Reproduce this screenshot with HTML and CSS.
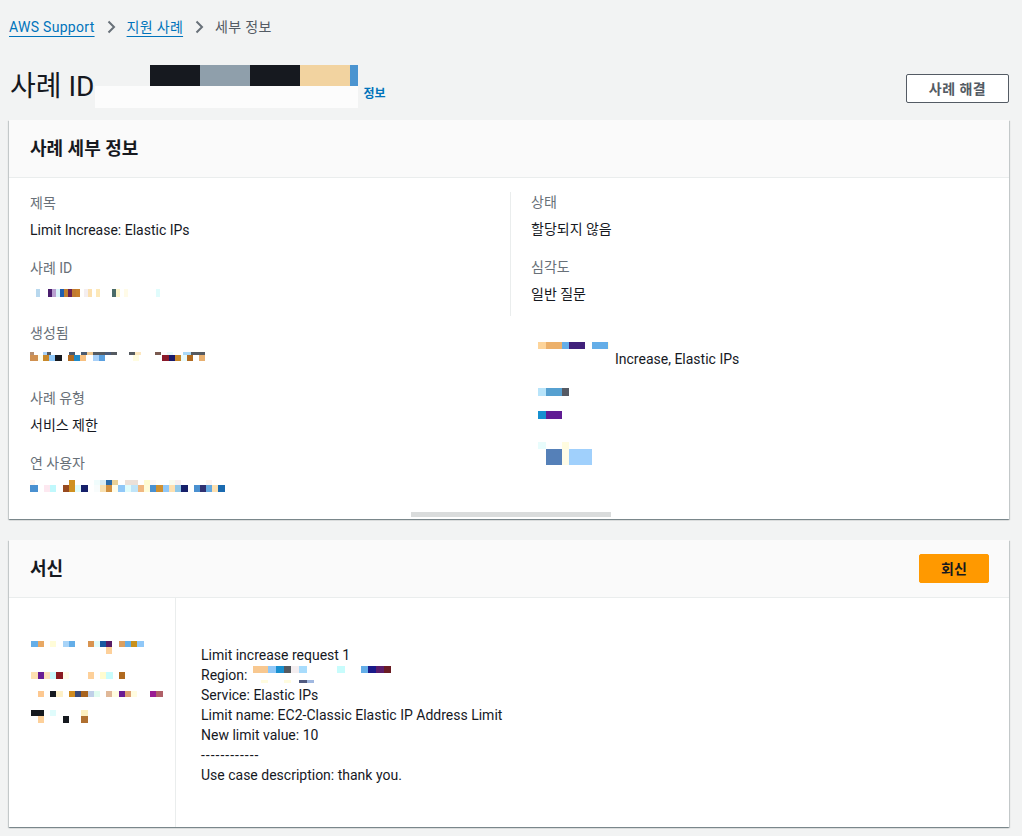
FILE: index.html
```html
<!DOCTYPE html>
<html lang="ko">
<head>
<meta charset="utf-8">
<title>세부 정보</title>
<link rel="stylesheet" href="styles.css">
</head>
<body>
<div class="page">
  <nav class="crumbs">
    <a class="crumb-link" href="#">AWS Support</a>
    <svg class="chev" viewBox="0 0 16 16" aria-hidden="true"><path d="M5.5 2.5 11 8 5.5 13.5"/></svg>
    <a class="crumb-link" href="#">지원 사례</a>
    <svg class="chev" viewBox="0 0 16 16" aria-hidden="true"><path d="M5.5 2.5 11 8 5.5 13.5"/></svg>
    <span class="crumb-current">세부 정보</span>
  </nav>

  <header class="page-head">
    <div class="title-wrap">
      <h1 class="title">사례 ID</h1>
      <div class="redact-title">
        <div class="redact-bar"></div>
        <div class="redact-mask"></div>
      </div>
      <a class="info-link" href="#">정보</a>
    </div>
    <button class="btn btn-normal" type="button">사례 해결</button>
  </header>

  <section class="card">
    <div class="card-head"><h2 class="card-title">사례 세부 정보</h2></div>
    <div class="details">
      <div class="col-left">
        <div class="field">
          <div class="label">제목</div>
          <div class="value">Limit Increase: Elastic IPs</div>
        </div>
        <div class="field">
          <div class="label">사례 ID</div>
          <div class="value px-caseid"></div>
        </div>
        <div class="field">
          <div class="label">생성됨</div>
          <div class="value px-created"></div>
        </div>
        <div class="field">
          <div class="label">사례 유형</div>
          <div class="value">서비스 제한</div>
        </div>
        <div class="field">
          <div class="label">연 사용자</div>
          <div class="value px-user"></div>
        </div>
      </div>
      <div class="col-right">
        <div class="group">
          <div class="field">
            <div class="label">상태</div>
            <div class="value">할당되지 않음</div>
          </div>
          <div class="field">
            <div class="label">심각도</div>
            <div class="value">일반 질문</div>
          </div>
        </div>
        <div class="extras">
          <div class="extras-text">Increase, Elastic IPs</div>
        </div>
      </div>
    </div>
    <div class="hscroll"><div class="hscroll-thumb"></div></div>
  </section>

  <section class="card card-mail">
    <div class="card-head">
      <h2 class="card-title">서신</h2>
      <button class="btn btn-primary" type="button">회신</button>
    </div>
    <div class="mail">
      <div class="mail-side"><div class="px-sender"></div></div>
      <div class="mail-text">
        <div class="line">Limit increase request 1</div>
        <div class="line">Region: <span class="px-region"></span></div>
        <div class="line">Service: Elastic IPs</div>
        <div class="line">Limit name: EC2-Classic Elastic IP Address Limit</div>
        <div class="line">New limit value: 10</div>
        <div class="line dash">------------</div>
        <div class="line">Use case description: thank you.</div>
      </div>
    </div>
  </section>
</div>
</body>
</html>
```

FILE: styles.css
```css
* { box-sizing: border-box; }

html, body {
  margin: 0;
  padding: 0;
  background: #f2f3f3;
}

body {
  font-family: Roboto, "Noto Sans CJK KR", sans-serif;
  font-size: 14px;
  line-height: 20px;
  color: #16191f;
}

.page {
  width: 1000px;
  margin-left: 9px;
  padding-top: 17px;
}

/* breadcrumbs */
.crumbs {
  display: flex;
  align-items: center;
  height: 20px;
  letter-spacing: 0.3px;
}

.crumb-link {
  color: #0073bb;
  text-decoration: underline;
  text-underline-offset: 4px;
  text-decoration-thickness: 1px;
}

.crumb-current {
  color: #545b64;
}

.chev {
  width: 16px;
  height: 16px;
  margin: 0 8px;
  fill: none;
  stroke: #687078;
  stroke-width: 2;
}

/* page header */
.page-head {
  display: flex;
  justify-content: space-between;
  align-items: flex-start;
  height: 43px;
  margin-top: 28px;
  margin-bottom: 12px;
}

.title-wrap {
  display: flex;
  align-items: flex-start;
  height: 43px;
}

.title {
  margin: 4px 0 0 1px;
  font-size: 28px;
  line-height: 36px;
  font-weight: 400;
  color: #16191f;
}

.redact-title {
  width: 263px;
  height: 43px;
  margin-left: 1px;
  display: flex;
  flex-direction: column;
}

.redact-bar {
  height: 21px;
  background: linear-gradient(to right,
    transparent 0 55px,
    #16191f 55px 105px,
    #8f9fab 105px 155px,
    #16191f 155px 205px,
    #f2d3a0 205px 255px,
    #4b94d0 255px 263px);
}

.redact-mask {
  height: 22px;
  background: #fcfcfc;
}

.info-link {
  margin: 21px 0 0 5px;
  font-size: 12px;
  line-height: 16px;
  font-weight: 700;
  color: #0073bb;
  text-decoration: none;
}

/* buttons */
.btn {
  font-family: Roboto, "Noto Sans CJK KR", sans-serif;
  font-size: 14px;
  font-weight: 700;
  line-height: 20px;
  border-radius: 2px;
  height: 29px;
  padding: 0 20px;
  cursor: pointer;
}

.btn-normal {
  margin-top: 9px;
  width: 103px;
  background: #ffffff;
  color: #545b64;
  border: 1px solid #545b64;
  letter-spacing: 0.5px;
}

.btn-primary {
  width: 70px;
  background: #ff9900;
  color: #16191f;
  border: 1px solid #ff9900;
}

/* cards */
.card {
  background: #ffffff;
  box-shadow: 0 1px 1px 0 rgba(0, 28, 36, 0.3),
              1px 1px 1px 0 rgba(0, 28, 36, 0.15),
              -1px 1px 1px 0 rgba(0, 28, 36, 0.15);
}

.card-head {
  height: 58px;
  background: #fafafa;
  border-bottom: 1px solid #eaeded;
  display: flex;
  align-items: center;
  justify-content: space-between;
  padding: 0 20px 0 21px;
}

.card-title {
  margin: 0;
  font-size: 18px;
  line-height: 22px;
  font-weight: 700;
  color: #16191f;
}

/* details */
.details {
  display: flex;
  padding: 15px 20px 0 21px;
}

.col-left {
  width: 480px;
}

.col-right {
  flex: 1;
}

.group {
  border-left: 1px solid #eaeded;
  padding: 0 0 12px 20px;
  margin-top: -1px;
}

.field {
  margin-bottom: 18px;
}

.field:last-child {
  margin-bottom: 0;
}

.label {
  color: #687078;
  margin-bottom: 7px;
}

.value {
  color: #16191f;
  min-height: 20px;
}

.px-caseid {
  background: linear-gradient(to right,
    transparent 0 6px, #b8d8ee 6px 10px, transparent 10px 18px,
    #4a1f6e 18px 22px, #b8a0d0 22px 26px, #d8f4fa 26px 30px,
    #1f5fb0 30px 34px, #c08030 34px 38px, #6a2050 38px 42px,
    #c07a30 42px 46px, #c8802a 46px 50px, transparent 50px 54px,
    #f4eef0 54px 58px, #fbe0b0 58px 62px, transparent 62px 66px,
    #fde8b8 66px 70px, transparent 70px 82px, #4a6a68 82px 86px,
    #fdf4c8 86px 90px, transparent 90px 94px, #fffbe8 94px 98px,
    transparent 98px 126px, #e0fcfc 126px 130px, transparent 130px)
    0 4px / 200px 8px no-repeat;
}

.px-created {
  background:
    linear-gradient(to right,
      #b89070 1px 5px, transparent 5px 14px, #a8d0f8 14px 18px,
      #555a60 18px 22px, transparent 22px 40px, #4a5a70 40px 46px,
      transparent 46px 52px, #4a5a70 52px 58px, #f0c890 58px 64px,
      #555a60 64px 76px, #4a5a78 76px 82px, #555a60 82px 88px,
      transparent 88px 100px, #555a60 100px 106px, #fde8c0 106px 112px,
      transparent 112px 126px, #7a5a50 126px 132px, #fdfcfc 132px 138px,
      #e8fafa 138px 144px, transparent 144px 154px, #a8d8f8 154px 162px,
      #555a60 162px 176px, transparent 176px)
      -1px 2px / 200px 3px no-repeat,
    linear-gradient(to right,
      #d09050 1px 9px, #fffce8 9px 14px, #c8882a 14px 20px,
      #90c8f8 20px 26px, #16191f 26px 33px, transparent 33px 39px,
      #b06a20 39px 45px, #1f8ac8 45px 51px, #f8c080 51px 57px,
      transparent 57px 64px, #a8d0f8 64px 70px, #5aa0e0 70px 76px,
      transparent 76px 104px, #fffce0 104px 110px, transparent 110px 133px,
      #8a1a2a 133px 140px, #1a1a6a 140px 146px, #c8882a 146px 152px,
      #e8fafa 152px 158px, #b06a20 158px 164px, transparent 164px 170px,
      #e8b070 170px 176px, transparent 176px)
      -1px 5px / 200px 6px no-repeat;
}

.px-user {
  background:
    linear-gradient(to right,
      #fdf4f0 1px 5px, transparent 5px 39px, #d09020 39px 45px,
      transparent 45px 64px, #f0fcfc 64px 70px, #d8ecf4 70px 76px,
      #2a6aa8 76px 82px, #e8d098 82px 88px, transparent 88px 95px,
      #ece0d8 95px 108px, transparent 108px 114px, #fffcd0 114px 120px,
      #fdf8f8 120px 126px, transparent 126px 139px, #f8fcf0 139px 145px,
      #f8f0f0 145px 151px, transparent 151px 176px, #fdf4f0 176px 182px,
      transparent 182px)
      0 0 / 200px 5px no-repeat,
    linear-gradient(to right,
      #4a90d0 1px 8px, transparent 8px 14px, #fde8f0 14px 20px,
      #c0f8fc 20px 26px, transparent 26px 33px, #984a20 33px 39px,
      #d09020 39px 45px, #e0fcfc 45px 51px, #16206a 51px 58px,
      transparent 58px 64px, #f8fcfc 64px 70px, #f8e0b0 70px 76px,
      #d09040 76px 82px, #fffce8 82px 88px, #90c8f8 88px 95px,
      #e0fcfc 95px 101px, #c0e4f8 101px 108px, #f0b880 108px 114px,
      #fffcd8 114px 120px, #4a90d0 120px 126px, #d09030 126px 133px,
      #90c8f8 133px 139px, #fde0b0 139px 145px, #90c8e8 145px 151px,
      #16206a 151px 158px, transparent 158px 164px, #4a90d0 164px 170px,
      #303070 170px 176px, #64a8e0 176px 182px, #fde0b0 182px 188px,
      #1a6ab0 188px 195px, transparent 195px)
      0 5px / 200px 7px no-repeat;
}

.extras {
  height: 150px;
  padding: 33px 0 0 105px;
  background:
    linear-gradient(to right,
      #fdd49a 0 8px, #ecb06a 8px 24px, #64aee8 24px 31px,
      #40207a 31px 47px, transparent 47px 54px, #64aee8 54px 70px,
      #fffce0 70px 71px, transparent 71px)
      28px 26px / 80px 7px no-repeat,
    linear-gradient(to right,
      #b8e4fa 0 8px, #56a0d0 8px 24px, #555a64 24px 31px)
      28px 72px / 31px 8px no-repeat,
    linear-gradient(to right,
      #1690d0 0 8px, #601c94 8px 24px)
      28px 95px / 24px 8px no-repeat,
    linear-gradient(to right,
      #e8fcfc 0 8px, transparent 8px 24px, #fffce0 24px 31px)
      28px 126px / 31px 7px no-repeat,
    linear-gradient(to right,
      transparent 0 8px, #5580b8 8px 24px, #fffce8 24px 31px,
      #a0d0fc 31px 54px)
      28px 133px / 54px 16px no-repeat;
}

.extras-text {
  color: #16191f;
}

.hscroll {
  padding: 12px 0 2px 402px;
}

.hscroll-thumb {
  width: 200px;
  height: 5px;
  background: #dadcdc;
}

/* correspondence */
.card-mail {
  margin-top: 21px;
  margin-bottom: 20px;
}

.mail {
  display: flex;
}

.mail-side {
  width: 167px;
  border-right: 1px solid #eaeded;
  padding: 43px 0 0 22px;
}

.px-sender {
  height: 82px;
  background:
    linear-gradient(to right,
      #64aee8 0 7px, #e8a864 7px 13px, transparent 13px 19px,
      #fffcd8 19px 25px, transparent 25px 32px, #a8d4f8 32px 38px,
      #64aee8 38px 44px, transparent 44px 57px, #d89450 57px 63px,
      #e0fcfc 63px 69px, #1a5aa0 69px 75px, #581c64 75px 81px,
      transparent 81px 88px, #dca060 88px 94px, #64aee8 94px 100px,
      #c8901c 100px 106px, #90c8f8 106px 113px, transparent 113px)
      0 0 / 140px 6px no-repeat,
    linear-gradient(to right, transparent 0 75px, #fdd09a 75px 81px, transparent 81px)
      0 6px / 140px 7px no-repeat,
    linear-gradient(to right,
      #fde0b0 0 7px, #6a1c94 7px 13px, #fde0b8 13px 19px,
      #c8f8fc 19px 25px, #8a1a20 25px 32px, #fffce8 32px 38px,
      transparent 38px 57px, #fdd09a 57px 63px, transparent 63px 69px,
      #fffcd0 69px 75px, #c8fcfc 75px 82px, transparent 82px 88px,
      #b06a20 88px 94px, transparent 94px)
      0 31px / 140px 7px no-repeat,
    linear-gradient(to right,
      transparent 0 7px, #fdc890 7px 13px, transparent 13px 19px,
      #16191f 19px 25px, #fdf0c8 25px 32px, transparent 32px 38px,
      #d08c20 38px 44px, #3a4a78 44px 50px, #a86420 50px 57px,
      #c0d0e8 57px 63px, #e0fcf0 63px 69px, transparent 69px 75px,
      #e0b898 75px 81px, #fffce0 81px 88px, #6a1c94 88px 94px,
      #dca070 94px 100px, #fffce0 100px 106px, transparent 106px 119px,
      #9a1c94 119px 125px, #b06068 125px 132px, transparent 132px)
      0 50px / 140px 6px no-repeat,
    linear-gradient(to right,
      #16191f 0 13px, transparent 13px 19px, #e0fcfc 19px 25px,
      transparent 25px 50px, #fdf0c0 50px 57px, transparent 57px)
      0 69px / 140px 6px no-repeat,
    linear-gradient(to right,
      transparent 0 7px, #fdd09a 7px 13px, transparent 13px 32px,
      #16191f 32px 38px, transparent 38px 50px, #b07030 50px 57px,
      transparent 57px)
      0 75px / 140px 7px no-repeat;
}

.mail-text {
  flex: 1;
  padding: 47px 20px 42px 25px;
}

.line {
  color: #16191f;
  white-space: pre;
}

.dash {
  letter-spacing: 1px;
}

.px-region {
  display: inline-block;
  width: 138px;
  height: 20px;
  margin-left: 2px;
  vertical-align: top;
  background:
    linear-gradient(to right,
      #f8c890 0 15px, #90c8f8 15px 23px, #1890d0 23px 31px,
      #555a60 31px 38px, #f4eef0 38px 46px, #a8dcfc 46px 54px,
      transparent 54px 84px, #c8fcfc 84px 92px, transparent 92px 108px,
      #64aee8 108px 115px, #1a1a8a 115px 123px, #5a1c6a 123px 131px,
      #6a1c24 131px 138px)
      0 1px / 138px 7px no-repeat,
    linear-gradient(to right,
      transparent 0 8px, #fffce0 8px 15px, transparent 15px 31px,
      #fffce0 31px 38px, transparent 38px 46px, #505a80 46px 54px,
      #a0b8e0 54px 61px, transparent 61px)
      0 15px / 138px 3px no-repeat;
}
```
